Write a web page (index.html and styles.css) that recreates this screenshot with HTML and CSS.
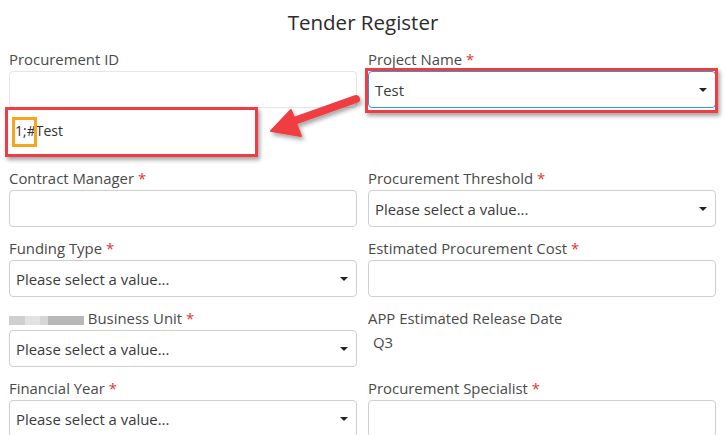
FILE: index.html
```html
<!DOCTYPE html>
<html lang="en">
  <head>
    <meta charset="UTF-8" />
    <meta name="viewport" content="width=device-width, initial-scale=1.0" />
    <title>Tender Register</title>
    <link rel="stylesheet" href="styles.css">
  </head>
  <body>
    <h1 class="title">Tender Register</h1>
    <form class="form">
      <div class="field">
        <label class="label">Procurement ID</label>
        <div class="input input-light"></div>
        <div class="lookup">
          <span class="lookup-text"><span class="prefix">1;#</span>Test</span>
          <span class="callout"></span>
        </div>
      </div>
      <div class="field">
        <label class="label">Project Name <span class="req">*</span></label>
        <div class="focus-wrap">
          <div class="input select focused"><span>Test</span><span class="caret"></span></div>
          <span class="callout callout-select"></span>
        </div>
      </div>

      <div class="field">
        <label class="label">Contract Manager <span class="req">*</span></label>
        <div class="input"></div>
      </div>
      <div class="field">
        <label class="label">Procurement Threshold <span class="req">*</span></label>
        <div class="input select"><span>Please select a value...</span><span class="caret"></span></div>
      </div>

      <div class="field">
        <label class="label">Funding Type <span class="req">*</span></label>
        <div class="input select"><span>Please select a value...</span><span class="caret"></span></div>
      </div>
      <div class="field">
        <label class="label">Estimated Procurement Cost <span class="req">*</span></label>
        <div class="input"></div>
      </div>

      <div class="field">
        <label class="label"><span class="blurred"></span> Business Unit <span class="req">*</span></label>
        <div class="input select"><span>Please select a value...</span><span class="caret"></span></div>
      </div>
      <div class="field">
        <label class="label">APP Estimated Release Date</label>
        <div class="value">Q3</div>
      </div>

      <div class="field">
        <label class="label">Financial Year <span class="req">*</span></label>
        <div class="input select"><span>Please select a value...</span><span class="caret"></span></div>
      </div>
      <div class="field">
        <label class="label">Procurement Specialist <span class="req">*</span></label>
        <div class="input"></div>
      </div>
    </form>

    <!-- annotation arrow -->
    <svg class="arrow" width="726" height="435" viewBox="0 0 726 435">
      <defs>
        <filter id="sh" x="-20%" y="-20%" width="140%" height="140%">
          <feDropShadow dx="2" dy="3" stdDeviation="2" flood-color="#000" flood-opacity="0.35" />
        </filter>
      </defs>
      <g filter="url(#sh)" fill="#ef3d43" stroke="#ef3d43">
        <line x1="356" y1="99" x2="294" y2="121" stroke-width="8" stroke-linecap="round" />
        <polygon points="271,131 291,110 301,136" stroke-width="2" stroke-linejoin="round" />
      </g>
    </svg>
  </body>
</html>
```

FILE: styles.css
```css
body {
  margin: 0;
  font-family: "Open Sans", "Noto Sans", sans-serif;
  color: #3b3b3b;
  background-color: #fff;
  position: relative;
}
.title {
  margin: 0;
  padding-top: 7px;
  height: 43px;
  line-height: 30px;
  font-size: 20.5px;
  font-weight: normal;
  text-align: center;
  color: #2b2b2b;
}
.form {
  display: grid;
  grid-template-columns: 348px 348px;
  column-gap: 11px;
  padding: 0 10px 0 9px;
}
.field {
  margin-bottom: 12px;
}
.label {
  display: block;
  height: 20px;
  line-height: 18px;
  margin-bottom: 1px;
  font-size: 14.9px;
  color: #4a4a4a;
  white-space: nowrap;
}
.req {
  color: #e8352f;
}
.input {
  box-sizing: border-box;
  height: 37px;
  border: 1px solid #cfcfcf;
  border-radius: 4px;
  background: #fff;
}
.input-light {
  border-color: #e6e6e6;
}
.select {
  display: flex;
  align-items: center;
  justify-content: space-between;
  padding: 0 8px 0 6px;
  font-size: 14.9px;
  color: #3a3a3a;
}
.caret {
  width: 0;
  height: 0;
  border-left: 4px solid transparent;
  border-right: 4px solid transparent;
  border-top: 4px solid #222;
}
.focused {
  border-color: #2a9ad8;
}
.focus-wrap {
  position: relative;
}
.lookup {
  position: relative;
  height: 49px;
  display: flex;
  align-items: center;
  padding-left: 6px;
  font-size: 14px;
  color: #333;
}
.lookup-text {
  margin-top: -5px;
}
.prefix {
  position: relative;
}
.prefix::after {
  content: "";
  position: absolute;
  left: -3px;
  top: -4px;
  width: 19px;
  height: 24px;
  border: 3px solid #f5a61f;
}
.callout {
  position: absolute;
  left: -4px;
  top: -1px;
  width: 247px;
  height: 44px;
  border: 3px solid #ef3d43;
  box-shadow: 2px 3px 4px rgba(0, 0, 0, 0.35);
}
.callout-select {
  left: -3px;
  top: -3px;
  width: 347px;
  height: 39px;
}
.value {
  padding-left: 5px;
  height: 28px;
  line-height: 24px;
  font-size: 14.9px;
  color: #4a4a4a;
}
.blurred {
  display: inline-block;
  width: 75px;
  height: 9px;
  vertical-align: -1px;
  background: linear-gradient(90deg, #cfcfcf 0 22%, #e2e2e2 22% 42%, #d6d6d6 42% 52%, #b8b8b8 52% 100%);
}
.arrow {
  position: absolute;
  left: 0;
  top: 0;
  pointer-events: none;
}
```
